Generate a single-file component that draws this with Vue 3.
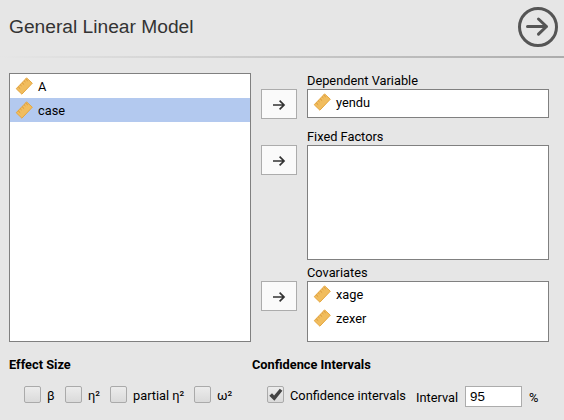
<script setup>
import { h } from 'vue'

const available = [
  { name: 'A', selected: false },
  { name: 'case', selected: true },
]
const targets = [
  { key: 'dependent', label: 'Dependent Variable', items: ['yendu'] },
  { key: 'fixed', label: 'Fixed Factors', items: [] },
  { key: 'covariates', label: 'Covariates', items: ['xage', 'zexer'] },
]
const effects = [
  { key: 'beta', label: 'β' },
  { key: 'eta', label: 'η²' },
  { key: 'partial', label: 'partial η²' },
  { key: 'omega', label: 'ω²' },
]

const RulerIcon = () =>
  h('svg', { width: 18, height: 18, viewBox: '0 0 18 18' }, [
    h('path', {
      d: 'M11.6 0.9 L17.3 6.2 L6.9 17.2 L1.2 11.7 Z',
      fill: '#f1bd5e',
      stroke: '#e4a640',
      'stroke-width': 1,
      'stroke-linejoin': 'round',
    }),
    h('path', {
      d: 'M3.2 9.8l2 1.9M5.2 7.7l1.3 1.2M7.1 5.7l2 1.9M9.1 3.7l1.3 1.2M10.7 2l2 1.9',
      stroke: '#d9983a',
      'stroke-width': 1,
      fill: 'none',
    }),
  ])
</script>

<template>
  <div class="panel">
    <header class="header">
      <h1 class="title">General Linear Model</h1>
      <svg class="go" width="42" height="42" viewBox="0 0 42 42">
        <circle cx="21" cy="21" r="18.5" />
        <path d="M10.5 20.5H29.5M21.5 13l8 7.5-8 7.7" />
      </svg>
    </header>
    <div class="rule"></div>

    <main class="supplier">
      <div class="box source">
        <div v-for="v in available" :key="v.name" class="row" :class="{ selected: v.selected }">
          <RulerIcon /><span>{{ v.name }}</span>
        </div>
      </div>
      <div class="targets">
        <section v-for="t in targets" :key="t.key" class="target" :class="t.key">
          <button class="move">
            <svg width="14" height="12" viewBox="0 0 14 12">
              <path d="M1 6h11M7.6 1.7L12 6l-4.4 4.3" />
            </svg>
          </button>
          <div class="field">
            <div class="label">{{ t.label }}</div>
            <div class="box">
              <div v-for="name in t.items" :key="name" class="row">
                <RulerIcon /><span>{{ name }}</span>
              </div>
            </div>
          </div>
        </section>
      </div>
    </main>

    <footer class="options">
      <section class="effect">
        <h2>Effect Size</h2>
        <div class="checks">
          <label v-for="e in effects" :key="e.key" class="check" :class="e.key">
            <span class="tick"></span><span>{{ e.label }}</span>
          </label>
        </div>
      </section>
      <section class="ci">
        <h2>Confidence Intervals</h2>
        <div class="checks">
          <label class="check confidence">
            <span class="tick">
              <svg width="16" height="16" viewBox="0 0 16 16">
                <path d="M1.3 8.7L4 6.2L6.1 8.5L11.8 1.8L14.4 3.8L6.4 13.7Z" />
              </svg>
            </span>
            <span>Confidence intervals</span>
          </label>
          <span class="interval">Interval</span>
          <input class="value" value="95" />
          <span class="percent">%</span>
        </div>
      </section>
    </footer>
  </div>
</template>

<style>
body {
  background: #e6e6e6;
}
</style>

<style scoped>
.panel {
  width: 564px;
  height: 420px;
  overflow: hidden;
  background: #e6e6e6;
  color: #000;
  font: 12.8px/16px Roboto, sans-serif;
}
.panel * {
  box-sizing: border-box;
}
.header {
  display: flex;
  justify-content: space-between;
  height: 56px;
  padding: 6px 5px 0 9px;
}
.title {
  margin: 0;
  padding-top: 9px;
  font: 19.2px/24px "Liberation Sans", Arial, sans-serif;
  color: #333;
}
.go {
  fill: none;
  stroke: #555;
  stroke-width: 3;
  stroke-linecap: round;
  stroke-linejoin: round;
}
.rule {
  height: 2px;
  background: linear-gradient(to right, #e6e6e6, #acacac);
}
.supplier {
  display: flex;
  gap: 10px;
  padding: 15px 0 0 9px;
}
.box {
  width: 242px;
  background: #fff;
  border: 1px solid #808080;
}
.source {
  height: 269px;
}
.row {
  display: flex;
  align-items: center;
  gap: 5px;
  height: 24px;
  padding: 2px 0 0 5px;
}
.row svg {
  margin-top: -2px;
}
.selected {
  background: #b3c9ef;
}
.target {
  display: flex;
  gap: 10px;
}
.move {
  display: flex;
  align-items: center;
  justify-content: center;
  width: 36px;
  height: 30px;
  margin-top: 16px;
  padding: 2px 0 0;
  background: #fafafa;
  border: 1px solid #acacac;
}
.move svg {
  fill: none;
  stroke: #333;
  stroke-width: 1.7;
}
.label {
  height: 16px;
}
.dependent {
  height: 56px;
}
.dependent .box {
  height: 29px;
}
.fixed {
  height: 136px;
}
.fixed .box {
  height: 115px;
}
.covariates .box {
  height: 61px;
}
.options {
  display: flex;
  padding: 15px 0 0 9px;
}
.effect {
  width: 243px;
}
h2 {
  margin: 0;
  font: bold 12.8px/16px Roboto, sans-serif;
}
.checks {
  display: flex;
  align-items: center;
  height: 24px;
  margin-top: 11px;
  padding-left: 15px;
}
.check {
  display: flex;
  align-items: center;
  gap: 6px;
}
.beta {
  width: 41px;
}
.eta {
  width: 45px;
}
.partial {
  width: 84px;
}
.tick {
  flex: none;
  width: 17px;
  height: 17px;
  margin-top: -3px;
  border: 1px solid #aaa;
  border-radius: 2px;
  background: linear-gradient(#ececec, #dadada);
}
.tick svg {
  display: block;
  fill: #444;
}
.confidence {
  width: 149px;
}
.interval {
  width: 49px;
  padding-top: 3px;
}
.value {
  width: 57px;
  height: 21px;
  padding: 0 4px;
  border: 1px solid #acacac;
  background: #fff;
  font: 13.33px "Liberation Sans", Arial, sans-serif;
  color: #000;
}
.percent {
  padding: 3px 0 0 7px;
}
</style>
